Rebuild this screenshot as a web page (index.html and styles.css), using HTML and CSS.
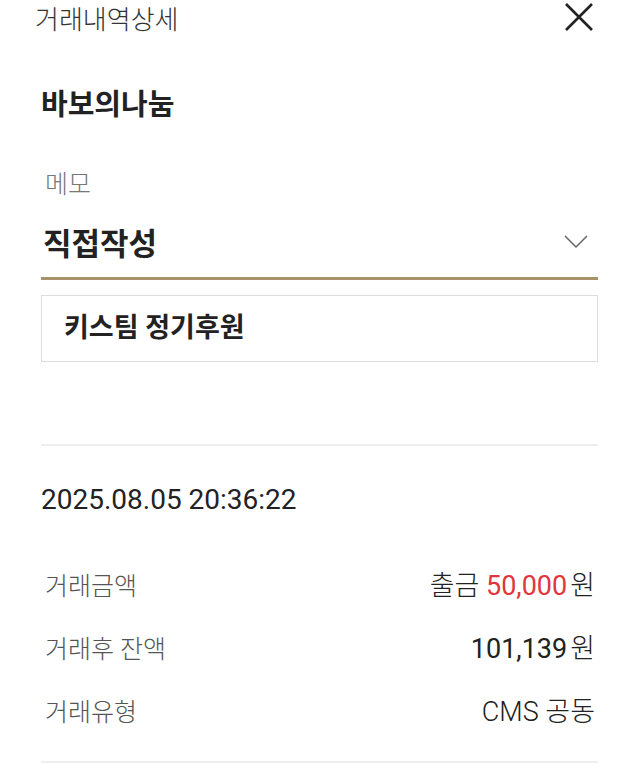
FILE: index.html
```html
<!DOCTYPE html>
<html>
  <head>
    <title>거래내역상세</title>
    <meta charset="UTF-8"/>
    <link rel="stylesheet" href="styles.css">
  </head>
  <body>
    <div id="header">
      <h1>거래내역상세</h1>
      <button id="close-btn" aria-label="닫기">
        <svg width="30" height="30" viewBox="0 0 30 30"><path d="M2 2 L28 28 M28 2 L2 28" stroke="#222" stroke-width="2.6" fill="none"/></svg>
      </button>
    </div>
    <div id="main-container">
      <h2 class="name">바보의나눔</h2>
      <div class="memo-label">메모</div>
      <div class="memo-select">
        <span>직접작성</span>
        <svg width="24" height="14" viewBox="0 0 24 14"><path d="M1 1 L12 12 L23 1" stroke="#666" stroke-width="1.5" fill="none"/></svg>
      </div>
      <div class="memo-box">키스팀 정기후원</div>
      <div class="divider"></div>
      <div class="date">2025.08.05 20:36:22</div>
      <div class="rows">
        <div class="row">
          <span class="label">거래금액</span>
          <span class="value">출금 <span class="num red">50,000</span><span class="won">원</span></span>
        </div>
        <div class="row">
          <span class="label">거래후 잔액</span>
          <span class="value"><span class="num">101,139</span><span class="won">원</span></span>
        </div>
        <div class="row">
          <span class="label">거래유형</span>
          <span class="value">CMS 공동</span>
        </div>
      </div>
      <div class="divider bottom"></div>
    </div>
  </body>
</html>
```

FILE: styles.css
```css
body {
  margin: 0;
  font-family: "Roboto", "Noto Sans CJK KR", sans-serif;
  color: #222;
  background-color: white;
}
#header {
  display: flex;
  align-items: center;
  justify-content: space-between;
  height: 34px;
  padding: 0 46px 0 35px;
}
h1 {
  margin: 0;
  font-size: 26px;
  font-weight: 300;
  color: #333;
}
#close-btn {
  display: flex;
  padding: 0;
  border: none;
  background: none;
}
#main-container {
  padding: 0 42px 0 41px;
}
.name {
  margin: 51px 0 0 0;
  font-size: 29px;
  font-weight: 700;
  line-height: 40px;
}
.memo-label {
  margin: 43px 0 0 4px;
  font-size: 25px;
  font-weight: 300;
  color: #777;
  line-height: 34px;
}
.memo-select {
  display: flex;
  align-items: center;
  justify-content: space-between;
  height: 71px;
  padding: 4px 10px 0 2px;
  border-bottom: 3px solid #a8926b;
  font-size: 31px;
  font-weight: 700;
}
.memo-box {
  margin-top: 15px;
  padding: 0 22px;
  height: 65px;
  line-height: 65px;
  border: 1px solid #ddd;
  font-size: 27px;
  font-weight: 700;
}
.divider {
  height: 2px;
  margin-top: 82px;
  background-color: #eee;
}
.date {
  margin-top: 34px;
  font-size: 28px;
  line-height: 40px;
}
.rows {
  margin-top: 32px;
}
.row {
  display: flex;
  align-items: center;
  justify-content: space-between;
  height: 63px;
  padding: 0 3px 0 4px;
  font-size: 25px;
  font-weight: 300;
}
.label {
  color: #555;
}
.value {
  color: #222;
  font-size: 27px;
  font-weight: 300;
}
.num {
  font-weight: 400;
}
.red {
  color: #e0373e;
}
.won {
  margin-left: 3px;
}
.divider.bottom {
  margin-top: 20px;
}
```
